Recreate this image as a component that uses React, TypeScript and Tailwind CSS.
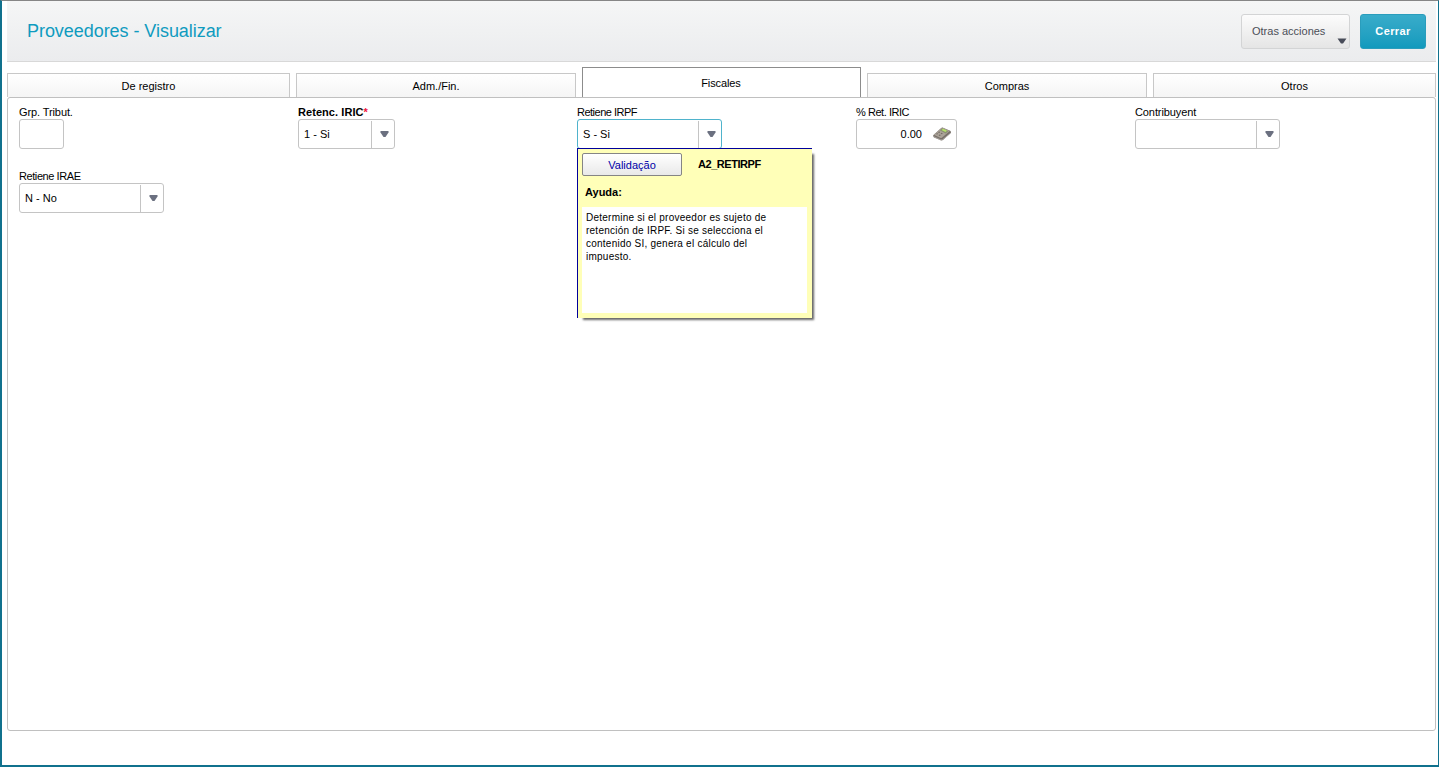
import React from 'react';
import clsx from 'clsx';

interface Tab {
  label: string;
  width: string;
  active?: boolean;
}

const tabs: Tab[] = [
  { label: 'De registro', width: 'w-[283px]' },
  { label: 'Adm./Fin.', width: 'w-[280px]' },
  { label: 'Fiscales', width: 'w-[279px]', active: true },
  { label: 'Compras', width: 'w-[280px]' },
  { label: 'Otros', width: 'w-[283px]' },
];

const helpLines = [
  'Determine si el proveedor es sujeto de',
  'retención de IRPF. Si se selecciona el',
  'contenido SI, genera el cálculo del',
  'impuesto.',
];

interface FieldProps {
  label: string;
  required?: boolean;
  tracking?: string;
  children: React.ReactNode;
}

const Field = ({ label, required, tracking, children }: FieldProps) => (
  <div className="relative h-16 w-[279px]">
    <label className={clsx('block h-[13px] leading-[13px] whitespace-nowrap', tracking, required && 'font-bold')}>
      {label}
      {required && <span className="text-[#f0143c]">*</span>}
    </label>
    {children}
  </div>
);

interface SelectBoxProps {
  value?: string;
  width: string;
  focused?: boolean;
}

const SelectBox = ({ value, width, focused }: SelectBoxProps) => (
  <div
    className={clsx(
      'flex h-[30px] rounded-[3px] border bg-white',
      width,
      focused ? 'border-[#4fb3cc]' : 'border-[#c4c4c4]',
    )}
  >
    <span className="flex-1 pl-[5px] leading-[28px]">{value}</span>
    <span className="mt-px flex w-[23px] justify-center border-l border-[#c4c4c4] pt-[10px] pl-[3px]">
      <svg width="9" height="7" viewBox="0 0 9 7">
        <path d="M0.500 0h8v1.500L5.500 6h-2L0.500 1.500z" fill="#6b7080" />
      </svg>
    </span>
  </div>
);

const CalculatorIcon = () => (
  <svg width="20" height="16" viewBox="0 0 20 16">
    <path d="M1.200 9.200 9.200 2q.8-.6 1.800-.3l7.200 3.100q1.100.7.700 2.300L11 14q-1.200.8-2.400.3L2 11.400q-1-.8-.8-2.200z" fill="#777069" />
    <path d="M1.800 8.700 9.500 2q.7-.5 1.400-.2L17.800 4.900 9.900 11.800q-.7.5-1.400.2z" fill="#aaa298" />
    <path d="m7.800 4.300 2.400-2 6.100 2.900-2.600 2.200z" fill="#8b8e72" />
    <path d="m9.500 4.100 1.600-1.300 4 1.900-1.600 1.400z" fill="#b4e368" />
    <path d="m4 8 1-.8 1.200.6-1 .8zm2.600 1.300 1-.8 1.200.6-1 .8zM6 6.300l1-.8 1.200.6-1 .8zm2.600 1.300 1-.8 1.200.6-1 .8z" fill="#706861" />
    <path d="m1.700 10.600 7.200 3.300 1.600-.2 8-6.400" fill="none" stroke="#c8c3be" strokeWidth=".6" />
  </svg>
);

const HelpPopup = () => (
  <div className="absolute top-[42px] left-0 z-10 h-[170px] w-[235px] border-t border-l border-[#00009c] bg-[#ffffb8] pt-1 pl-1 shadow-[4px_4px_2px_-2px_rgba(0,0,0,0.6)]">
    <div className="flex items-start">
      <button className="h-[23px] w-[100px] rounded-[2px] border border-[#858585] bg-linear-to-b from-white to-[#e9e9e9] text-[11px] leading-[22px] text-[#0000a8]">
        Validação
      </button>
      <b className="ml-4 leading-[22px] tracking-[-0.45px]">A2_RETIRPF</b>
    </div>
    <div className="h-[31px] pt-[9px] pl-[3px] leading-[14px] font-bold">Ayuda:</div>
    <div className="h-[106px] w-[225px] bg-white pt-1 pl-1 text-[10px] leading-[13px] tracking-[0.24px]">
      {helpLines.map((line) => (
        <p key={line} className="whitespace-nowrap">
          {line}
        </p>
      ))}
    </div>
  </div>
);

const App: React.FC = () => {
  return (
    <div className="flex h-[767px] w-[1439px] flex-col border-t border-r border-b-2 border-l-2 border-t-[#868686] border-r-[#10718d] border-b-[#10718d] border-l-[#10718d] bg-white pr-0.5 pl-[5px] font-['Liberation_Sans',Arial,sans-serif] text-[11px] text-black">
      <header className="flex h-[61px] items-start justify-between border-b border-[#d8d8d8] bg-linear-to-b from-[#f5f6f6] to-[#ebecee] pr-2.5 pl-5">
        <h1 className="pt-[18px] text-[18px] leading-6 tracking-[-0.05px] text-[#0f9bbf]">Proveedores - Visualizar</h1>
        <div className="flex gap-2.5 pt-[13px]">
          <button className="relative h-[35px] w-[109px] rounded-[3px] border border-[#d3d4d5] bg-linear-to-b from-[#fcfcfc] to-[#e5e5e5] pl-2.5 text-left text-[#4b4e57]">
            Otras acciones
            <svg className="absolute right-[2px] bottom-[4px]" width="10" height="6" viewBox="0 0 10 6">
              <path d="M0.500 0.500h9L6 5.500H4z" fill="#484c59" />
            </svg>
          </button>
          <button className="h-[35px] w-[66px] rounded-[3px] border border-[#2a9dbc] bg-linear-to-b from-[#38acca] to-[#109abd] font-bold tracking-[0.4px] text-white">
            Cerrar
          </button>
        </div>
      </header>

      <nav className="flex h-[35px] shrink-0 items-end gap-1.5">
        {tabs.map((tab) => (
          <button
            key={tab.label}
            className={clsx(
              'shrink-0 border border-b-0',
              tab.width,
              tab.active
                ? 'h-[30px] border-[#8c8c8c] bg-white pt-0.5 pr-px tracking-[-0.1px]'
                : 'h-6 border-[#c8c8c8] bg-linear-to-b from-white to-[#f5f5f5] pt-px',
            )}
          >
            {tab.label}
          </button>
        ))}
      </nav>

      <main className="flex h-[634px] shrink-0 flex-wrap content-start rounded-[3px] border border-[#c0c0c0] pt-2 pl-[11px]">
        <Field label="Grp. Tribut." tracking="tracking-[-0.1px]">
          <div className="h-[30px] w-[45px] rounded-[3px] border border-[#c4c4c4]" />
        </Field>
        <Field label="Retenc. IRIC" tracking="tracking-[0.06px]" required>
          <SelectBox value="1 - Si" width="w-[97px]" />
        </Field>
        <Field label="Retiene IRPF" tracking="tracking-[-0.5px]">
          <SelectBox value="S - Si" width="w-[145px]" focused />
          <HelpPopup />
        </Field>
        <Field label="% Ret. IRIC" tracking="tracking-[-0.45px]">
          <div className="flex h-[30px] w-[101px] items-center justify-end gap-2.5 rounded-[3px] border border-[#c4c4c4] pr-1">
            <span>0.00</span>
            <CalculatorIcon />
          </div>
        </Field>
        <Field label="Contribuyent" tracking="tracking-[-0.1px]">
          <SelectBox width="w-[145px]" />
        </Field>
        <Field label="Retiene IRAE" tracking="tracking-[-0.42px]">
          <SelectBox value="N - No" width="w-[145px]" />
        </Field>
      </main>
    </div>
  );
};

export default App;
